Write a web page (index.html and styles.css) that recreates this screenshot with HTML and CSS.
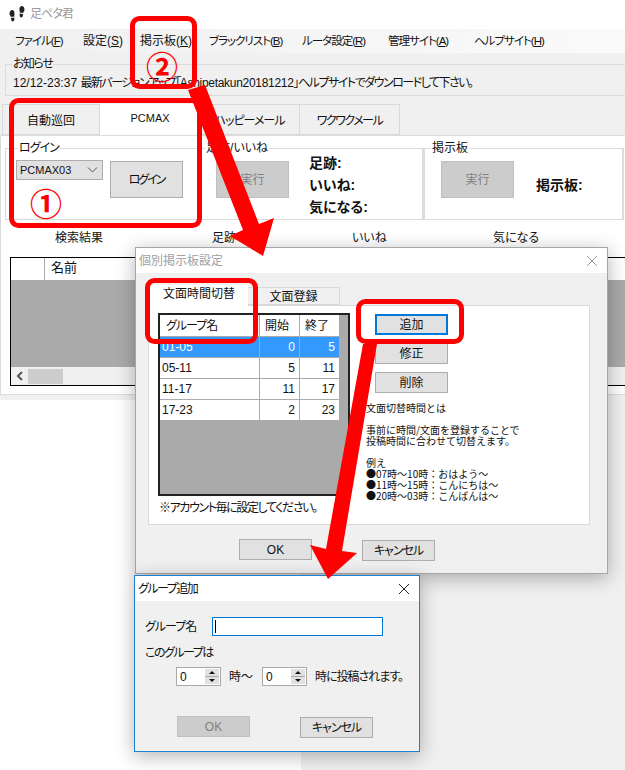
FILE: index.html
```html
<!DOCTYPE html>
<html lang="ja">
<head>
    <meta charset="UTF-8">
    <title>足ペタ君</title>
    <link rel="stylesheet" href="styles.css">
</head>
<body>
<div class="desk"></div>

<div class="mainWin">
    <div class="titleBar">
        <svg class="appIcon" width="16" height="17" viewBox="0 0 16 17">
            <path fill="#222" d="M.6 9.500C.2 7.300 1.200 5.200 3 5.100c1.800-.1 2.800 1.700 2.500 4-.1 1-.3 1.700-.2 2.400l-3.400.5C1.800 11.200 1 10.600.6 9.500z"/>
            <path fill="#222" d="M2 13l3.300-.5c.4 2-.2 3.800-1.500 4-1.200.2-1.800-1.500-1.800-3.500z"/>
            <path fill="#222" d="M15.400 5.500C15.800 3.300 14.800 1.200 13 1c-1.800-.1-2.800 1.700-2.500 4 .1 1 .3 1.700.2 2.400l3.400.5c.1-.8.900-1.300 1.300-2.400z"/>
            <path fill="#222" d="M14 9l-3.300-.5c-.4 2 .2 3.800 1.500 4 1.200.2 1.800-1.500 1.800-3.500z"/>
        </svg>
        <span class="titleText tight">足ペタ君</span>
    </div>
    <ul class="menu">
        <li class="m1 kana">ファイル(<u>F</u>)</li>
        <li class="m2">設定(<u>S</u>)</li>
        <li class="m3">掲示板(<u>K</u>)</li>
        <li class="m4 kana">ブラックリスト(<u>B</u>)</li>
        <li class="m5 kana">ルータ設定(<u>R</u>)</li>
        <li class="m6 kana">管理サイト(<u>A</u>)</li>
        <li class="kana">ヘルプサイト(<u>H</u>)</li>
    </ul>
    <fieldset class="notice">
        <legend class="tighter">お知らせ</legend>
        <p>12/12-23:37 <span class="squeeze">最新バージョンアップ「</span><span class="latin">Ashipetakun20181212</span><span class="squeeze">」ヘルプサイトでダウンロードして下さい。</span></p>
    </fieldset>
    <div class="tabs">
        <div class="tab">自動巡回</div>
        <div class="tab active">PCMAX</div>
        <div class="tab tight">ハッピーメール</div>
        <div class="tab tighter">ワクワクメール</div>
    </div>
    <div class="tabPanel">
        <div class="groups">
            <fieldset class="group loginGroup">
                <legend class="tight">ログイン</legend>
                <div class="combo">
                    <span>PCMAX03</span>
                    <svg width="11" height="6" viewBox="0 0 11 6"><path d="M1 .5l4.500 4.500L10 .5" fill="none" stroke="#555"/></svg>
                </div>
                <button class="btn bigBtn loginBtn">ログイン</button>
            </fieldset>
            <fieldset class="group stepGroup">
                <legend>足跡/いいね</legend>
                <button class="btn bigBtn off">実行</button>
                <div class="stats">
                    <div>足跡:</div>
                    <div>いいね:</div>
                    <div>気になる:</div>
                </div>
            </fieldset>
            <fieldset class="group boardGroup">
                <legend>掲示板</legend>
                <button class="btn bigBtn off">実行</button>
                <div class="boardStat">掲示板:</div>
            </fieldset>
        </div>
        <div class="resultHead">
            <span>検索結果</span>
            <span>足跡</span>
            <span>いいね</span>
            <span>気になる</span>
        </div>
        <div class="resultTable">
            <div class="resultCols">
                <div class="rowHead"></div>
                <div class="nameCol">名前</div>
            </div>
            <div class="resultBody"></div>
            <div class="hScroll">
                <svg width="8" height="10" viewBox="0 0 8 10"><path d="M6 1L2 5l4 4" fill="none" stroke="#555" stroke-width="2"/></svg>
                <div class="thumb"></div>
            </div>
        </div>
    </div>
</div>

<div class="dialog boardDlg">
    <div class="dlgTitle">
        <span class="dlgName off">個別掲示板設定</span>
        <svg width="12" height="12" viewBox="0 0 12 12"><path d="M1 1l10 10M11 1L1 11" stroke="#999" fill="none"/></svg>
    </div>
    <div class="dlgBody">
        <div class="dlgTabs">
            <div class="dlgTab on">文面時間切替</div>
            <div class="dlgTab">文面登録</div>
        </div>
        <div class="dlgPanel">
            <div class="leftCol">
                <div class="timeTable">
                    <div class="timeGrid">
                        <div class="th first tight">グループ名</div><div class="th">開始</div><div class="th">終了</div>
                        <div class="td sel">01-05</div><div class="td num sel">0</div><div class="td num sel">5</div>
                        <div class="td">05-11</div><div class="td num">5</div><div class="td num">11</div>
                        <div class="td">11-17</div><div class="td num">11</div><div class="td num">17</div>
                        <div class="td">17-23</div><div class="td num">2</div><div class="td num">23</div>
                    </div>
                </div>
                <p class="note">※アカウント毎に設定してください。</p>
            </div>
            <div class="rightCol">
                <div class="sideBtns">
                    <button class="btn focus">追加</button>
                    <button class="btn">修正</button>
                    <button class="btn">削除</button>
                </div>
                <p class="helpText">文面切替時間とは

事前に時間/文面を登録することで
投稿時間に合わせて切替えます。

例え
●07時～10時：おはよう～
●11時～15時：こんにちは～
●20時～03時：こんばんは～</p>
            </div>
        </div>
        <div class="dlgBtns boardBtns">
            <button class="btn">OK</button>
            <button class="btn lower tight">キャンセル</button>
        </div>
    </div>
</div>

<div class="dialog groupDlg">
    <div class="dlgTitle">
        <span class="dlgName tighter">グループ追加</span>
        <svg width="12" height="12" viewBox="0 0 12 12"><path d="M1 1l10 10M11 1L1 11" stroke="#222" fill="none"/></svg>
    </div>
    <div class="addBody">
        <div class="nameRow">
            <label class="tight">グループ名</label>
            <div class="nameInput"><i class="caret"></i></div>
        </div>
        <p class="addLabel tighter">このグループは</p>
        <div class="spinRow">
            <div class="spin">
                <span>0</span>
                <div class="spinBtns"><b class="up"></b><b class="down"></b></div>
            </div>
            <span class="hourFrom">時〜</span>
            <div class="spin">
                <span>0</span>
                <div class="spinBtns"><b class="up"></b><b class="down"></b></div>
            </div>
            <span class="hourTo tight">時に投稿されます。</span>
        </div>
        <div class="dlgBtns addBtns">
            <button class="btn off">OK</button>
            <button class="btn lower tight">キャンセル</button>
        </div>
    </div>
</div>

<svg class="marks" width="625" height="770" viewBox="0 0 625 770">
    <g fill="none" stroke="#f00" stroke-width="5">
        <rect x="11.500" y="100.500" width="188" height="125" rx="7"/>
        <rect x="132.500" y="18.500" width="62" height="68" rx="7"/>
        <rect x="147.500" y="280.500" width="108" height="61" rx="7"/>
        <rect x="358.500" y="301.500" width="103" height="40" rx="7"/>
    </g>
    <g fill="#f00">
        <polygon points="188,90 205,85 259,224 274,218 263,256 230,236 243,230"/>
        <polygon points="363,344 377,344 342,551 357,553 328,579 310,545 326,549"/>
    </g>
</svg>
<span class="num1">①</span>
<span class="num2">②</span>
</body>
</html>
```

FILE: styles.css
```css
*{
    box-sizing: border-box;
}
body{
    position: relative;
    width: 625px;
    height: 770px;
    margin: 0;
    overflow: hidden;
    background-color: #f0f0f0;
    color: #111;
    font-family: "Liberation Sans", "Noto Sans CJK JP", sans-serif;
    font-size: 12px;
    line-height: 14px;
    font-feature-settings: "palt";
}
p{
    margin: 0;
}
fieldset{
    min-width: 0;
    margin: 0;
    padding: 0;
    border: 1px solid #dcdcdc;
}
legend{
    padding: 0 1px;
    line-height: 14px;
}
.tight{
    letter-spacing: -1px;
}
.tighter{
    letter-spacing: -1.5px;
}
.desk{
    position: absolute;
    left: 0;
    top: 400px;
    width: 301px;
    height: 370px;
    background-color: #fff;
}

.btn{
    width: 73px;
    height: 21px;
    padding: 0;
    border: 1px solid #adadad;
    background-color: #e1e1e1;
    color: #111;
    font: inherit;
}
.btn.tight{
    letter-spacing: -1px;
}
.btn.off{
    border-color: #bfbfbf;
    background-color: #ccc;
    color: #808080;
}
.btn.focus{
    border: 2px solid #0078d7;
}
.bigBtn{
    height: 37px;
}

/* main window */
.mainWin{
    position: absolute;
    left: 0;
    top: 0;
    width: 625px;
    height: 395px;
    background-color: #f0f0f0;
}
.titleBar{
    display: flex;
    align-items: center;
    height: 29px;
    padding-left: 9px;
    background-color: #fff;
}
.appIcon{
    margin-top: -3px;
}
.titleText{
    margin-left: 5px;
    margin-top: -2px;
    color: #9a9a9a;
}
.menu{
    display: flex;
    height: 24px;
    margin: 0;
    padding: 5px 0 0 15px;
    list-style: none;
    background: linear-gradient(90deg, #f0f0f0, #fafafa);
}
.menu li{
    white-space: nowrap;
}
.menu .kana{
    font-size: 11.500px;
    letter-spacing: -1px;
}
.m1{ width: 68px; }
.m2{ width: 57px; }
.m3{ width: 69px; }
.m4{ width: 93px; }
.m5{ width: 86px; }
.m6{ width: 86px; }
.notice{
    height: 39px;
    margin: 4px 0 8px 5px;
    border-right: 0;
}
.notice legend{
    margin-left: 6px;
}
.notice p{
    padding: 5px 0 0 7px;
    white-space: nowrap;
}
.squeeze{
    letter-spacing: -1.500px;
}
.latin{
    letter-spacing: -.3px;
}
.tabs{
    display: flex;
    height: 31px;
    padding-left: 2px;
}
.tab{
    width: 100px;
    padding-top: 9px;
    border: 1px solid #d9d9d9;
    border-left-width: 0;
    text-align: center;
}
.tab:first-child{
    width: 98px;
    border-left-width: 1px;
}
.tab.active{
    position: relative;
    padding-top: 7px;
    border: 0;
    background-color: #fff;
    font-size: 11px;
}
.tabPanel{
    height: 260px;
    padding: 5px 0 0 3px;
    border: 1px solid #dcdcdc;
    border-right: 0;
    background-color: #fff;
}
.groups{
    display: flex;
    height: 79px;
    padding-left: 1px;
}
.group{
    display: flex;
    align-items: flex-start;
    height: 79px;
    padding-top: 6px;
}
.loginGroup{
    width: 194px;
    padding-left: 10px;
}
.loginGroup legend{
    margin-left: 2px;
}
.stepGroup{
    width: 224px;
    padding-left: 17px;
    border-left: 0;
}
.stepGroup legend{
    margin-left: -11px;
}
.boardGroup{
    width: 201px;
    padding-left: 16px;
    border-left-width: 2px;
    border-right-width: 2px;
}
.boardGroup legend{
    margin-left: -10px;
}
.combo{
    display: flex;
    align-items: center;
    justify-content: space-between;
    width: 87px;
    height: 20px;
    margin-top: -1px;
    padding: 0 4px 0 3px;
    border: 1px solid #adadad;
    background-color: #e1e1e1;
    font-size: 11px;
}
.loginGroup .bigBtn{
    margin-left: 7px;
}
.btn.loginBtn{
    letter-spacing: -2px;
}
.stats{
    margin: -9px 0 0 20px;
    font-size: 14px;
    font-weight: bold;
    line-height: 22px;
}
.boardStat{
    margin: 13px 0 0 22px;
    font-size: 14px;
    font-weight: bold;
    line-height: 22px;
}
.resultHead{
    display: grid;
    grid-template-columns: 157px 140px 141px 60px;
    height: 14px;
    margin: 11px 0 0 51px;
}
.resultTable{
    width: 640px;
    height: 129px;
    margin: 12px 0 0 6px;
    border: 1px solid #000;
}
.resultCols{
    display: flex;
    height: 22px;
    background-color: #fff;
}
.rowHead{
    width: 34px;
    border-right: 1px solid #aaa;
}
.nameCol{
    padding: 3px 0 0 6px;
    font-size: 13px;
}
.resultBody{
    height: 87px;
    background-color: #aaa;
}
.hScroll{
    display: flex;
    align-items: center;
    height: 18px;
    padding-left: 5px;
    background-color: #f0f0f0;
}
.thumb{
    width: 35px;
    height: 15px;
    margin-left: 4px;
    background-color: #cdcdcd;
}

/* dialogs */
.dialog{
    position: absolute;
    background-color: #f0f0f0;
    box-shadow: 0 4px 18px rgba(0, 0, 0, .3);
}
.boardDlg{
    left: 135px;
    top: 247px;
    width: 473px;
    height: 327px;
    border: 1px solid #a6a6a6;
}
.groupDlg{
    left: 134px;
    top: 575px;
    width: 286px;
    height: 177px;
    border: 1px solid #1f7fcf;
}
.dlgTitle{
    display: flex;
    align-items: center;
    justify-content: space-between;
    height: 25px;
    padding: 0 9px 0 3px;
    background-color: #fff;
}
.dlgName.off{
    color: #a0a0a0;
}
.dlgBody{
    padding: 12px 0 0 12px;
}
.dlgTabs{
    display: flex;
    height: 20px;
    padding-left: 2px;
}
.dlgTab{
    width: 92px;
    height: 18px;
    margin-top: 2px;
    border: 1px solid #d9d9d9;
    border-left: 0;
    text-align: center;
    line-height: 18px;
}
.dlgTab.on{
    position: relative;
    width: 98px;
    height: 21px;
    margin-top: 0;
    border: 0;
    background-color: #fff;
    line-height: 18px;
}
.dlgPanel{
    display: flex;
    gap: 16px;
    width: 442px;
    height: 220px;
    padding: 7px 0 0 9px;
    border: 1px solid #d9d9d9;
    background-color: #fff;
}
.timeTable{
    width: 192px;
    height: 183px;
    border: 2px solid #222;
    background-color: #aaa;
}
.timeGrid{
    display: grid;
    grid-template-columns: 99px 39px 39px;
    grid-template-rows: 21px repeat(4, 20px);
    gap: 1px;
    width: 179px;
}
.th{
    padding: 4px 0 0 5px;
    background-color: #fff;
}
.th.first{
    padding-left: 6px;
}
.td{
    padding: 3px 0 0 2px;
    background-color: #fff;
}
.num{
    padding-right: 4px;
    text-align: right;
}
.sel{
    background-color: #39f;
    color: #fff;
}
.note{
    margin: 5px 0 0 1px;
    letter-spacing: -1.400px;
    white-space: nowrap;
}
.sideBtns{
    display: flex;
    flex-direction: column;
    gap: 8px;
    margin: 1px 0 0 9px;
}
.helpText{
    margin-top: 9px;
    font-family: "Noto Sans CJK JP", sans-serif;
    font-size: 10px;
    line-height: 11px;
    white-space: pre;
    font-feature-settings: normal;
}
.dlgBtns{
    display: flex;
    align-items: flex-start;
    gap: 50px;
}
.boardBtns{
    margin: 14px 0 0 91px;
}
.lower{
    margin-top: 1px;
}
.addBody{
    padding: 16px 0 0 10px;
}
.nameRow{
    display: flex;
    align-items: center;
}
.nameRow label{
    width: 67px;
}
.nameInput{
    display: flex;
    align-items: center;
    width: 171px;
    height: 19px;
    padding-left: 2px;
    border: 1px solid #0078d7;
    background-color: #fff;
}
.caret{
    width: 1px;
    height: 13px;
    background-color: #000;
}
.addLabel{
    margin-top: 10px;
}
.spinRow{
    display: flex;
    align-items: center;
    height: 19px;
    margin: 7px 0 0 31px;
}
.spin{
    display: flex;
    justify-content: space-between;
    align-items: center;
    width: 45px;
    height: 19px;
    padding: 0 1px 0 3px;
    border: 1px solid #a9a9a9;
    background-color: #fff;
}
.spinBtns{
    display: flex;
    flex-direction: column;
    gap: 1px;
    width: 14px;
    height: 15px;
    background-color: #a9a9a9;
}
.spinBtns b{
    display: flex;
    align-items: center;
    justify-content: center;
    flex: 1;
    background-color: #e1e1e1;
}
.up::after{
    content: "";
    border: 3px solid transparent;
    border-top: 0;
    border-bottom: 3px solid #111;
}
.down::after{
    content: "";
    border: 3px solid transparent;
    border-bottom: 0;
    border-top: 3px solid #111;
}
.hourFrom{
    width: 41px;
    padding-left: 8px;
}
.hourTo{
    padding-left: 8px;
}
.addBtns{
    margin: 30px 0 0 32px;
}

/* red marks drawn over the screenshot */
.marks{
    position: absolute;
    left: 0;
    top: 0;
}
.num1,
.num2{
    position: absolute;
    color: #f00;
    font-family: "Noto Sans CJK JP", sans-serif;
    font-size: 32px;
    font-weight: bold;
    line-height: 32px;
}
.num1{
    left: 30px;
    top: 186px;
}
.num2{
    left: 146px;
    top: 49px;
}
```
